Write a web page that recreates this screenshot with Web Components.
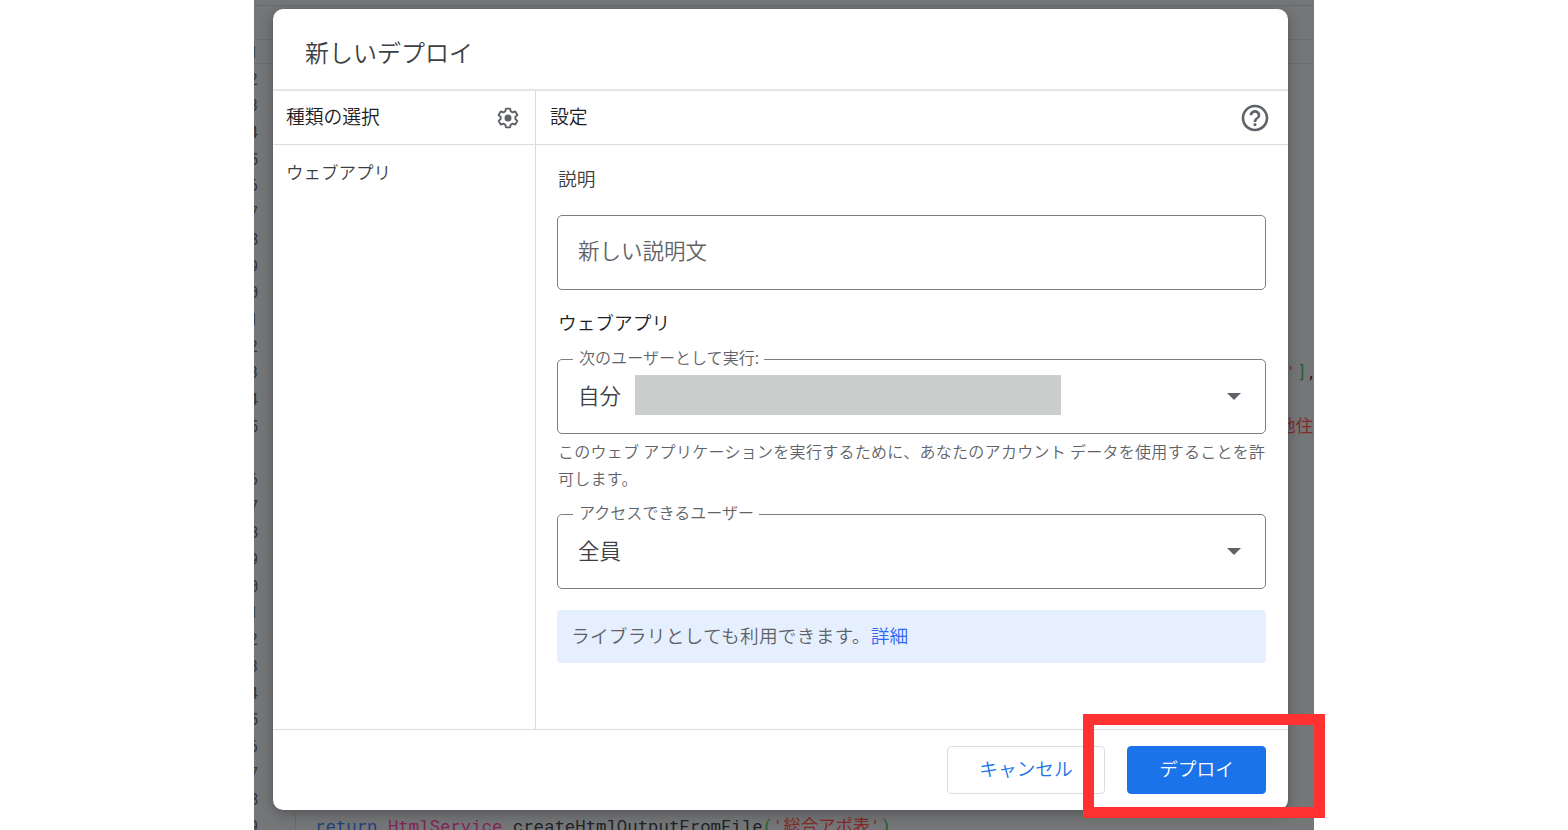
<!DOCTYPE html>
<html lang="ja">
<head>
<meta charset="utf-8">
<title>新しいデプロイ</title>
<style>
  body {
    margin: 0;
    width: 1568px;
    height: 830px;
    overflow: hidden;
    position: relative;
    background: #fff;
    color: #3c4043;
    font-family: "Noto Sans CJK JP", sans-serif;
    font-weight: 350;
  }
</style>
</head>
<body>
<code-editor></code-editor>

<deploy-dialog>
  <span slot="title">新しいデプロイ</span>
  <span slot="side-title">種類の選択</span>
  <span slot="side-item">ウェブアプリ</span>
  <span slot="main-title">設定</span>

  <form-label>説明</form-label>
  <outlined-field><span style="color: #5f6368; padding-bottom: 3px">新しい説明文</span></outlined-field>

  <form-label style="margin-top: 18px; color: #202124">ウェブアプリ</form-label>
  <outlined-field select label="次のユーザーとして実行:" style="margin-top: 11px">自分<redacted-text></redacted-text></outlined-field>
  <helper-text>このウェブ アプリケーションを実行するために、あなたのアカウント データを使用することを許可します。</helper-text>
  <outlined-field select label="アクセスできるユーザー">全員</outlined-field>

  <info-banner>ライブラリとしても利用できます。<span slot="link">詳細</span></info-banner>

  <action-button slot="actions" style="width: 158px">キャンセル</action-button>
  <action-button slot="actions" primary style="width: 139px">デプロイ</action-button>
</deploy-dialog>

<highlight-frame></highlight-frame>

<script>
// small helper, every element gets its own open shadow root
class BaseElement extends HTMLElement {
  constructor() {
    super();
    this.attachShadow({ mode: 'open' });
  }

  connectedCallback() {
    this.shadowRoot.innerHTML = this.render();
  }
}

// dimmed script editor behind the dialog
class CodeEditor extends BaseElement {
  render() {
    const rows = '123456789012345_67890123456789'
      .split('')
      .map((n, i) => `<div class="row"><span class="num">${n === '_' ? '' : n}</span>${this._code(i)}</div>`)
      .join('');
    return `
      <style>
        :host {
          display: block;
          box-sizing: border-box;
          width: 1060px;
          height: 830px;
          margin-left: 254px;
          overflow: hidden;
          background: #757678;
          font-family: "Roboto Mono", "Liberation Mono", "Noto Sans CJK JP", monospace;
          font-size: 17.35px;
          font-weight: 400;
          color: #202226;
        }
        .bar { height: 5px; border-bottom: 1px solid #67696b; }
        .tools {
          box-sizing: border-box;
          height: 25px;
          margin-top: 33px;
          border: solid #6c6d70;
          border-width: 1px 0;
        }
        .rows { margin-top: -25px; }
        .row {
          display: flex;
          height: 26.7px;
          line-height: 26.7px;
          white-space: pre;
        }
        .num {
          flex: none;
          width: 41px;
          text-indent: -5.5px;
          font-size: 16.5px;
          color: #35373b;
        }
        .line { flex: 1; padding-left: 19px; border-left: 1px solid #696b6e; }
        .line.right { padding: 0; border: 0; text-align: right; margin-right: -3px; }
        .kw { color: #1f4378; }
        .cls { color: #812557; }
        .str { color: #832a27; }
        .par { color: #24602b; }
      </style>
      <div class="bar"></div>
      <div class="tools"></div>
      <div class="rows">${rows}</div>
    `;
  }

  _code(i) {
    if (i === 12) {
      return `<span class="line right"><span class="str">'</span><span class="par">]</span>,</span>`;
    }
    if (i === 14) {
      return `<span class="line right" style="margin-right: 1px"><span class="str">地住</span></span>`;
    }
    if (i === 29) {
      return `<span class="line"><span class="kw">return</span> <span class="cls">HtmlService</span>.createHtmlOutputFromFile<span class="par">(</span><span class="str">'総合アポ表'</span><span class="par">)</span></span>`;
    }
    return '';
  }
}

class DeployDialog extends BaseElement {
  render() {
    return `
      <style>
        :host {
          position: absolute;
          left: 273px;
          top: 9px;
          width: 1015px;
          height: 801px;
          display: flex;
          flex-direction: column;
          border-radius: 10px;
          overflow: hidden;
          background: #fff;
          box-shadow: 0 0 1px #55575a, 0 4px 14px rgba(0, 0, 0, .28);
        }
        header {
          box-sizing: border-box;
          height: 82px;
          padding: 4px 0 0 32px;
          display: flex;
          align-items: center;
          border-bottom: 2px solid #e4e5e8;
          font-size: 24px;
        }
        .columns { flex: none; height: 638px; display: flex; }
        aside {
          box-sizing: border-box;
          width: 263px;
          border-right: 1px solid #dadce0;
        }
        main { flex: 1; }
        .bar {
          box-sizing: border-box;
          height: 54px;
          display: flex;
          align-items: center;
          justify-content: space-between;
          padding: 0 15px 0 13px;
          border-bottom: 1px solid #dadce0;
          font-size: 18.8px;
          color: #202124;
        }
        .bar slot { display: block; padding-bottom: 4px; }
        main .bar { padding: 0 17px 0 14px; }
        .item { padding: 13px 13px; font-size: 17.5px; line-height: 28px; }
        .form { padding: 19px 22px 0 21px; }
        footer {
          box-sizing: border-box;
          flex: 1;
          display: flex;
          justify-content: flex-end;
          gap: 22px;
          padding: 16px 22px 0 0;
          border-top: 1px solid #dadce0;
        }
        svg { display: block; fill: #5f6368; }
      </style>
      <header><slot name="title"></slot></header>
      <div class="columns">
        <aside>
          <div class="bar">
            <slot name="side-title"></slot>
            <svg width="24" height="24" viewBox="0 0 24 24">
              <path fill="none" stroke="#5f6368" stroke-width="1.9" stroke-linejoin="round" d="M9.9 2.6h4.2l.55 2.65 1.95 1.1 2.65-.85 2.1 3.6-2 1.85v2.1l2 1.85-2.1 3.6-2.65-.85-1.95 1.1-.55 2.65H9.9l-.55-2.65-1.95-1.1-2.65.85-2.1-3.6 2-1.85v-2.1l-2-1.85 2.1-3.6 2.65.85 1.95-1.1z"/>
              <circle cx="12" cy="12" r="3.5"/>
            </svg>
          </div>
          <div class="item"><slot name="side-item"></slot></div>
        </aside>
        <main>
          <div class="bar">
            <slot name="main-title"></slot>
            <svg width="32" height="32" viewBox="0 0 24 24">
              <path d="M11 18h2v-2h-2v2zm1-16C6.48 2 2 6.48 2 12s4.48 10 10 10 10-4.48 10-10S17.52 2 12 2zm0 18c-4.41 0-8-3.59-8-8s3.59-8 8-8 8 3.59 8 8-3.59 8-8 8zm0-14c-2.21 0-4 1.79-4 4h2c0-1.1.9-2 2-2s2 .9 2 2c0 2-3 1.75-3 5h2c0-2.25 3-2.5 3-5 0-2.21-1.79-4-4-4z"/>
            </svg>
          </div>
          <div class="form"><slot></slot></div>
        </main>
      </div>
      <footer><slot name="actions"></slot></footer>
    `;
  }
}

class FormLabel extends BaseElement {
  render() {
    return `
      <style>
        :host { display: block; height: 28px; padding-left: 1px; line-height: 28px; font-size: 18.7px; }
      </style>
      <slot></slot>
    `;
  }
}

class OutlinedField extends BaseElement {
  render() {
    const label = this.getAttribute('label');
    const arrow = this.hasAttribute('select')
      ? '<svg width="14" height="7" viewBox="0 0 14 7"><path d="M0 0h14L7 7z" fill="#5f6368"/></svg>'
      : '';
    return `
      <style>
        :host { display: block; height: ${label ? 87 : 75}px; margin-top: ${label ? 9 : 23}px; }
        fieldset {
          box-sizing: border-box;
          height: 100%;
          min-width: 0;
          margin: 0;
          padding: 0 24px 0 15px;
          border: 1px solid #7b8086;
          border-radius: 5px;
        }
        legend {
          height: 24px;
          padding: 0 5px 0 6px;
          line-height: 20px;
          font-size: 16px;
          letter-spacing: .05px;
          color: #5f6368;
        }
        .value {
          height: ${label ? 48 : 71}px;
          padding-left: 5px;
          display: flex;
          align-items: center;
          font-size: 21.5px;
          line-height: 30px;
        }
        svg { margin: 2px 0 0 auto; }
      </style>
      <fieldset>
        ${label ? `<legend>${label}</legend>` : ''}
        <div class="value"><slot></slot>${arrow}</div>
      </fieldset>
    `;
  }
}

class RedactedText extends BaseElement {
  render() {
    return `
      <style>
        :host { display: block; width: 426px; height: 40px; margin-left: 14px; background: #cccecd; }
      </style>
    `;
  }
}

class HelperText extends BaseElement {
  render() {
    return `
      <style>
        :host {
          display: block;
          height: 55px;
          margin: 4px -6px 0 1px;
          font-size: 16px;
          line-height: 26.7px;
          letter-spacing: .29px;
          color: #5f6368;
        }
      </style>
      <slot></slot>
    `;
  }
}

class InfoBanner extends BaseElement {
  render() {
    return `
      <style>
        :host {
          box-sizing: border-box;
          display: flex;
          align-items: center;
          height: 53px;
          margin-top: 21px;
          padding: 0 0 5px 14px;
          border-radius: 4px;
          background: #e6effe;
          font-size: 18.7px;
          letter-spacing: .25px;
          color: #5f6368;
        }
        a { color: #3367fb; }
      </style>
      <slot></slot><a><slot name="link"></slot></a>
    `;
  }
}

class ActionButton extends BaseElement {
  render() {
    return `
      <style>
        :host { display: block; height: 48px; }
        button {
          width: 100%;
          height: 100%;
          padding: 0 0 6px;
          border: 1px solid #dadce0;
          border-radius: 4px;
          background: #fff;
          font: inherit;
          font-size: 18.7px;
          color: #1a73e8;
        }
        :host([primary]) button { border-color: #1a73e8; background: #1a73e8; color: #fff; }
      </style>
      <button><slot></slot></button>
    `;
  }
}

// red annotation drawn over the submit button
class HighlightFrame extends BaseElement {
  render() {
    return `
      <style>
        :host {
          position: absolute;
          left: 1083px;
          top: 714px;
          box-sizing: border-box;
          width: 242px;
          height: 104px;
          border: 11px solid #ff3131;
        }
      </style>
    `;
  }
}

customElements.define('code-editor', CodeEditor);
customElements.define('deploy-dialog', DeployDialog);
customElements.define('form-label', FormLabel);
customElements.define('outlined-field', OutlinedField);
customElements.define('redacted-text', RedactedText);
customElements.define('helper-text', HelperText);
customElements.define('info-banner', InfoBanner);
customElements.define('action-button', ActionButton);
customElements.define('highlight-frame', HighlightFrame);
</script>
</body>
</html>
